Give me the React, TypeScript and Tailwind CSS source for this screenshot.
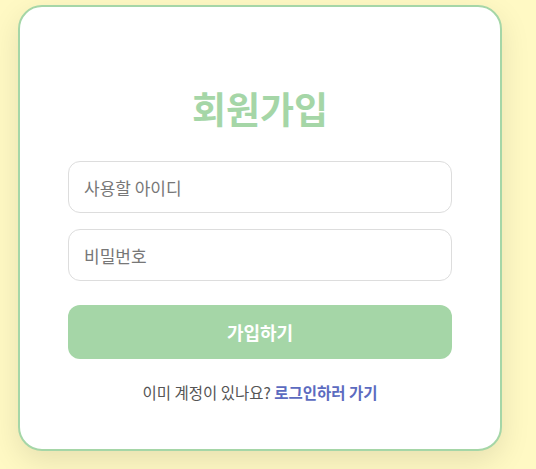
import React from 'react';

const font = { fontFamily: '"Noto Sans CJK KR", "Noto Sans", sans-serif' };

const SignUp: React.FC = () => {
  return (
    <div className="min-h-screen w-full bg-[#fff9c4] pl-[18px] pt-[5px]" style={font}>
      <div className="w-[484px] h-[446px] bg-white border-2 border-[#a5d6a7] rounded-[24px] shadow-[0_10px_30px_rgba(0,0,0,0.1)] px-[48px] pt-[80px]">
        {/* Title */}
        <h1 className="text-center text-[37px] leading-[42px] font-bold text-[#a5d6a7]">
          회원가입
        </h1>

        <form className="mt-[32px] flex flex-col">
          <input
            type="text"
            placeholder="사용할 아이디"
            className="h-[52px] w-full rounded-[12px] border border-[#dddddd] px-[15px] text-[17px] text-gray-700 placeholder:text-[#777777] outline-none"
          />
          <input
            type="password"
            placeholder="비밀번호"
            className="mt-[16px] h-[52px] w-full rounded-[12px] border border-[#dddddd] px-[15px] text-[17px] text-gray-700 placeholder:text-[#777777] outline-none"
          />
          <button
            type="button"
            className="mt-[24px] h-[54px] w-full rounded-[12px] bg-[#a5d6a7] text-[18px] font-bold text-white"
          >
            가입하기
          </button>
        </form>

        {/* Login link */}
        <p className="mt-[22px] text-center text-[15.5px] text-[#555555]">
          이미 계정이 있나요?{' '}
          <a href="#" className="font-bold text-[#5c6bc0]">
            로그인하러 가기
          </a>
        </p>
      </div>
    </div>
  );
};

export default function App() {
  return <SignUp />;
}
